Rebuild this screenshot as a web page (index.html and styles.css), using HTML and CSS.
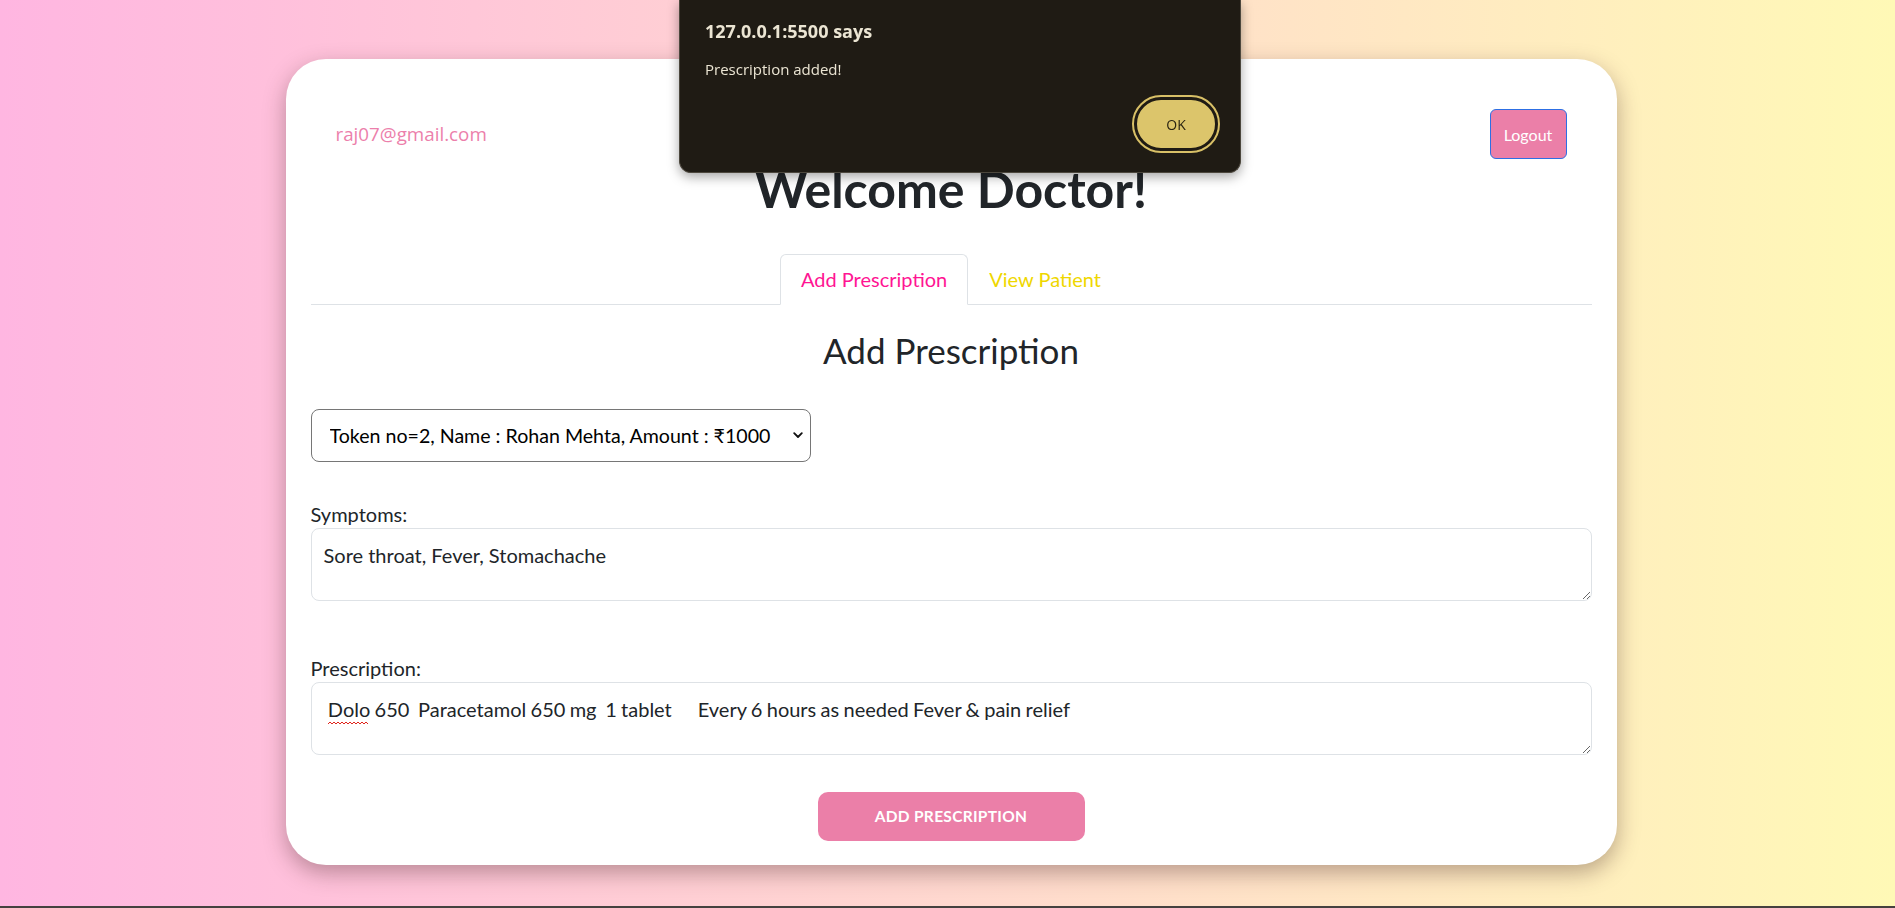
FILE: index.html
```html
<!DOCTYPE html>
<html lang="en">
<head>
<meta charset="utf-8">
<title>Doctor Dashboard</title>
<link rel="stylesheet" href="styles.css">
</head>
<body>
  <main class="card">
    <header class="topbar">
      <span class="email">raj07@gmail.com</span>
      <button class="logout" type="button">Logout</button>
    </header>
    <h1 class="welcome">Welcome Doctor!</h1>
    <nav class="tabs">
      <a class="tab active">Add Prescription</a>
      <a class="tab">View Patient</a>
    </nav>
    <section class="form">
      <h2 class="form-title">Add Prescription</h2>
      <div class="select-wrap">
        <select class="patient-select">
          <option>Token no=2, Name : Rohan Mehta, Amount : ₹1000</option>
        </select>
        <svg class="chev" width="10" height="7" viewBox="0 0 10 7"><path d="M1.2 1.2 L5 5 L8.8 1.2" fill="none" stroke="#111" stroke-width="1.8" stroke-linecap="round" stroke-linejoin="round"/></svg>
      </div>
      <label class="label">Symptoms:</label>
      <textarea class="area area-first" spellcheck="false">Sore throat, Fever, Stomachache</textarea>
      <label class="label">Prescription:</label>
      <div class="area-wrap">
        <textarea class="area area-rx" spellcheck="false"> Dolo 650  Paracetamol 650 mg  1 tablet      Every 6 hours as needed Fever &amp; pain relief</textarea>
        <svg class="squiggle" width="40" height="4" viewBox="0 0 40 4"><path d="M0 3 L2 1 L4 3 L6 1 L8 3 L10 1 L12 3 L14 1 L16 3 L18 1 L20 3 L22 1 L24 3 L26 1 L28 3 L30 1 L32 3 L34 1 L36 3 L38 1 L40 3" fill="none" stroke="#e0241b" stroke-width="1"/></svg>
      </div>
      <div class="actions">
        <button class="submit" type="button">ADD PRESCRIPTION</button>
      </div>
    </section>
  </main>

  <div class="alert" role="alertdialog">
    <div class="alert-title">127.0.0.1:5500 says</div>
    <div class="alert-msg">Prescription added!</div>
    <div class="alert-actions">
      <button class="alert-ok" type="button">OK</button>
    </div>
  </div>
  <div class="bottom-line"></div>
</body>
</html>
```

FILE: styles.css
```css
* { box-sizing: border-box; }

html, body { height: 100%; }

body {
  margin: 0;
  padding-left: 7px;
  min-height: 908px;
  overflow: hidden;
  background: linear-gradient(to right, #ffb6e1 0%, #ffd8cf 50%, #fff9b6 100%);
  font-family: Lato, "Open Sans", "Liberation Sans", sans-serif;
  color: #212529;
}

.card {
  width: 1331px;
  margin: 59px auto 0;
  background: #fff;
  border-radius: 40px;
  padding: 25px 25px 24px;
  box-shadow: 0 8px 22px rgba(60, 30, 30, 0.35);
}

.topbar {
  display: flex;
  justify-content: space-between;
  align-items: center;
  padding: 25px 25px 0;
  height: 75px;
}

.email {
  font-family: "Open Sans", "Liberation Sans", sans-serif;
  font-size: 18.8px;
  color: #ec7fab;
}

.logout {
  width: 77px;
  height: 50px;
  background: #eb7fa8;
  color: #fff;
  border: 1px solid #2d6fe4;
  border-radius: 6px;
  font-family: Lato, sans-serif;
  font-size: 16px;
  padding: 0;
}

.welcome {
  margin: 0 0 35px;
  text-align: center;
  font-size: 50px;
  font-weight: 700;
  line-height: 1.2;
  color: #212529;
}

.tabs {
  display: flex;
  justify-content: center;
  border-bottom: 1px solid #dee2e6;
}

.tab {
  display: block;
  padding: 10px 20px;
  font-size: 20px;
  line-height: 28.5px;
  border: 1px solid transparent;
  border-top-left-radius: 6px;
  border-top-right-radius: 6px;
  margin-bottom: -1px;
  color: #efd700;
}

.tab.active {
  color: #ff1493;
  background: #fff;
  border-color: #dee2e6 #dee2e6 #fff;
}

.form-title {
  margin: 24px 0 38px;
  font-size: 35px;
  font-weight: 400;
  line-height: 42px;
  text-align: center;
  color: #212529;
}

.select-wrap {
  position: relative;
  width: 500px;
  margin-bottom: 40px;
}

.patient-select {
  display: block;
  width: 500px;
  height: 53px;
  appearance: none;
  -webkit-appearance: none;
  background: #fff;
  border: 1px solid #767676;
  border-radius: 8px;
  padding: 0 24px 0 18px;
  font-family: Lato, "Noto Sans", sans-serif;
  font-size: 19.6px;
  color: #000;
}

.chev {
  position: absolute;
  right: 8px;
  top: 23px;
  pointer-events: none;
}

.label {
  display: block;
  font-size: 20px;
  line-height: 24px;
  margin-bottom: 2px;
  color: #212529;
}

.area {
  display: block;
  width: 100%;
  height: 73px;
  padding: 12px 12px;
  border: 1px solid #dee2e6;
  border-radius: 8px;
  font-family: Lato, sans-serif;
  font-size: 20px;
  line-height: 28.5px;
  color: #212529;
  background: #fff;
  resize: vertical;
}

.area-first { margin-bottom: 55px; }

.area-rx { word-spacing: -0.8px; }

.area-wrap {
  position: relative;
  margin-bottom: 37px;
}

.squiggle {
  position: absolute;
  left: 17px;
  top: 39px;
}

.actions {
  display: flex;
  justify-content: center;
}

.submit {
  width: 267px;
  height: 49px;
  border: none;
  border-radius: 10px;
  background: #eb7fa8;
  color: #fff;
  font-family: Lato, sans-serif;
  font-weight: 700;
  font-size: 15.5px;
  letter-spacing: 0.3px;
}

.alert {
  position: fixed;
  top: 0;
  left: 679px;
  width: 562px;
  height: 173px;
  background: #1f1b14;
  border: 1px solid #4c473d;
  border-top: none;
  border-radius: 0 0 12px 12px;
  box-shadow: 0 4px 12px rgba(0, 0, 0, 0.35);
  padding: 19px 22px 0 25px;
  font-family: "Open Sans", "Noto Sans", sans-serif;
  color: #ebe5d3;
}

.alert-title {
  font-size: 18px;
  font-weight: 700;
  line-height: 24px;
}

.alert-msg {
  margin-top: 16px;
  font-size: 15px;
  line-height: 20px;
}

.alert-actions {
  display: flex;
  justify-content: flex-end;
  margin-top: 18px;
}

.alert-ok {
  width: 84px;
  height: 54px;
  border-radius: 27px;
  background: #dcc56b;
  border: 3px solid #1f1b14;
  outline: 2px solid #d8c067;
  outline-offset: 0;
  color: #2a2412;
  font-family: "Open Sans", sans-serif;
  font-size: 14px;
  padding: 0;
}

.bottom-line {
  position: fixed;
  left: 0;
  right: 0;
  bottom: 0;
  height: 2px;
  background: #45413f;
}
```
